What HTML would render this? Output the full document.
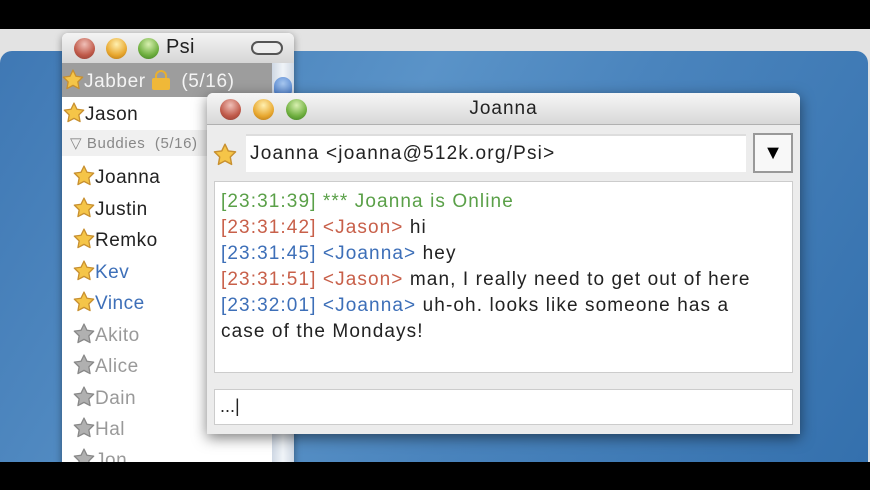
<!DOCTYPE html>
<html><head><style>
*{margin:0;padding:0;box-sizing:border-box}
body{width:870px;height:490px;background:#000;position:relative;overflow:hidden;font-family:"Liberation Sans",sans-serif}
.abs{position:absolute}
.star{display:inline-block;width:22px;height:22px;vertical-align:-4px;margin-right:0px}
.btn{position:absolute;width:21px;height:21px;border-radius:50%}
.r{background:radial-gradient(circle at 50% 30%,#f0c0b8,#c05a4a 60%,#8a3a30)}
.y{background:radial-gradient(circle at 50% 30%,#fff0b0,#e8a830 60%,#b07010)}
.g{background:radial-gradient(circle at 50% 30%,#d8f0b0,#70b040 60%,#3a7a20)}
.li{position:absolute;left:11px;font-size:19px;color:#222;letter-spacing:0.5px;white-space:nowrap}
.chat div{height:26px;line-height:26px;white-space:nowrap}
</style></head><body>
<div class="abs" style="left:0;top:29px;width:870px;height:433px;background:#e3e3e3"></div>
<div class="abs" style="left:0;top:51px;width:868px;height:411px;background:linear-gradient(120deg,#3f78b4 0%,#5a93c8 40%,#4a84bd 60%,#3470ad 100%);border-radius:12px 12px 0 0"></div>
<svg width="0" height="0" style="position:absolute"><defs>
<symbol id="st" viewBox="0 0 20 20"><path d="M10 1l2.7 5.6 6.1.8-4.4 4.3 1.1 6.1L10 14.9 4.5 17.8l1.1-6.1L1.2 7.4l6.1-.8z" fill="#f5c548" stroke="#c89030" stroke-width="1.2" stroke-linejoin="round"/></symbol>
<symbol id="gs" viewBox="0 0 20 20"><path d="M10 1l2.7 5.6 6.1.8-4.4 4.3 1.1 6.1L10 14.9 4.5 17.8l1.1-6.1L1.2 7.4l6.1-.8z" fill="#b0b0b0" stroke="#888" stroke-width="1.2" stroke-linejoin="round"/></symbol>
</defs></svg>
<!-- Psi window -->
<div class="abs" style="left:62px;top:33px;width:232px;height:440px;background:#fff;border-radius:6px 6px 0 0;box-shadow:0 2px 8px rgba(0,0,0,.4);overflow:hidden">
 <div class="abs" style="left:0;top:0;width:232px;height:30px;background:linear-gradient(#f4f4f4,#d6d6d6)"></div>
 <div class="btn r" style="left:12px;top:5px"></div><div class="btn y" style="left:44px;top:5px"></div><div class="btn g" style="left:76px;top:5px"></div>
 <div class="abs" style="left:104px;top:3px;font-size:20px;color:#222;letter-spacing:0.3px">Psi</div>
 <div class="abs" style="left:189px;top:8px;width:32px;height:14px;border:2px solid #555;border-radius:8px;background:#eee"></div>
 <div class="abs" style="left:0;top:30px;width:232px;height:34px;background:#9d9d9d"></div>
 <div class="abs" style="left:0;top:36px;font-size:19px;color:#f4f4f4;white-space:nowrap;letter-spacing:0.6px"><svg class="star"><use href="#st"/></svg>Jabber <span style="display:inline-block;width:18px;height:20px;vertical-align:-3px;position:relative"><span style="position:absolute;left:3px;top:0;width:12px;height:12px;border:2px solid #e8b030;border-radius:6px 6px 0 0"></span><span style="position:absolute;left:0;top:8px;width:18px;height:12px;background:#f0b838;border-radius:2px"></span></span> &nbsp;(5/16)</div>
 <div class="abs" style="left:210px;top:30px;width:22px;height:410px;background:linear-gradient(90deg,#cfd8e4,#f0f4f8,#cfd8e4)"></div>
 <div class="abs" style="left:212px;top:44px;width:18px;height:22px;border-radius:9px;background:radial-gradient(circle at 50% 30%,#a8c8f0,#2a64c0)"></div>
 <div class="li" style="left:1px;top:69px"><svg class="star"><use href="#st"/></svg>Jason</div>
 <div class="abs" style="left:0;top:97px;width:210px;height:26px;background:#f0f0f0"></div>
 <div class="abs" style="left:8px;top:101px;font-size:15px;color:#888;white-space:nowrap;letter-spacing:0.6px">▽ Buddies &nbsp;(5/16)</div>
 <div class="li" style="top:132px"><svg class="star"><use href="#st"/></svg>Joanna</div>
 <div class="li" style="top:164px"><svg class="star"><use href="#st"/></svg>Justin</div>
 <div class="li" style="top:195px"><svg class="star"><use href="#st"/></svg>Remko</div>
 <div class="li" style="top:227px;color:#3d6fb8"><svg class="star"><use href="#st"/></svg>Kev</div>
 <div class="li" style="top:258px;color:#3d6fb8"><svg class="star"><use href="#st"/></svg>Vince</div>
 <div class="li" style="top:290px;color:#999"><svg class="star"><use href="#gs"/></svg>Akito</div>
 <div class="li" style="top:321px;color:#999"><svg class="star"><use href="#gs"/></svg>Alice</div>
 <div class="li" style="top:353px;color:#999"><svg class="star"><use href="#gs"/></svg>Dain</div>
 <div class="li" style="top:384px;color:#999"><svg class="star"><use href="#gs"/></svg>Hal</div>
 <div class="li" style="top:415px;color:#999"><svg class="star"><use href="#gs"/></svg>Jon</div>
</div>
<div class="abs" style="left:0;top:462px;width:870px;height:28px;background:#000"></div>
<!-- Chat window -->
<div class="abs" style="left:207px;top:93px;width:593px;height:341px;background:#ececec;border-radius:6px 6px 0 0;box-shadow:0 4px 14px rgba(0,0,0,.5);overflow:hidden">
 <div class="abs" style="left:0;top:0;width:593px;height:32px;background:linear-gradient(#f6f6f6,#d8d8d8);border-bottom:1px solid #b0b0b0"></div>
 <div class="btn r" style="left:13px;top:6px"></div><div class="btn y" style="left:46px;top:6px"></div><div class="btn g" style="left:79px;top:6px"></div>
 <div class="abs" style="left:0;top:5px;width:593px;text-align:center;font-size:19px;color:#222;letter-spacing:1px">Joanna</div>
 <div class="abs" style="left:6px;top:50px"><svg class="star" style="width:24px;height:24px"><use href="#st"/></svg></div>
 <div class="abs" style="left:39px;top:41px;width:500px;height:38px;background:#fff;border-top:2px solid #ddd"></div>
 <div class="abs" style="left:43px;top:50px;font-size:19px;color:#222;letter-spacing:1.2px;white-space:nowrap">Joanna &lt;joanna@512k.org/Psi&gt;</div>
 <div class="abs" style="left:546px;top:40px;width:40px;height:40px;border:2px solid #999;background:#f8f8f8;text-align:center;font-size:20px;line-height:36px">▼</div>
 <div class="abs chat" style="left:7px;top:88px;width:579px;height:192px;background:#fff;border:1px solid #ccc;padding:7px 6px;font-size:19px;letter-spacing:1.1px;color:#222">
  <div style="color:#5aa048">[23:31:39] *** Joanna is Online</div>
  <div><span style="color:#c8604a">[23:31:42] &lt;Jason&gt;</span> hi</div>
  <div><span style="color:#3d6fb8">[23:31:45] &lt;Joanna&gt;</span> hey</div>
  <div><span style="color:#c8604a">[23:31:51] &lt;Jason&gt;</span> man, I really need to get out of here</div>
  <div><span style="color:#3d6fb8">[23:32:01] &lt;Joanna&gt;</span> uh-oh. looks like someone has a</div>
  <div>case of the Mondays!</div>
 </div>
 <div class="abs" style="left:7px;top:296px;width:579px;height:36px;background:#fff;border:1px solid #ccc;font-size:18px;padding:6px 5px;color:#222">...|</div>
</div>
</body></html>
